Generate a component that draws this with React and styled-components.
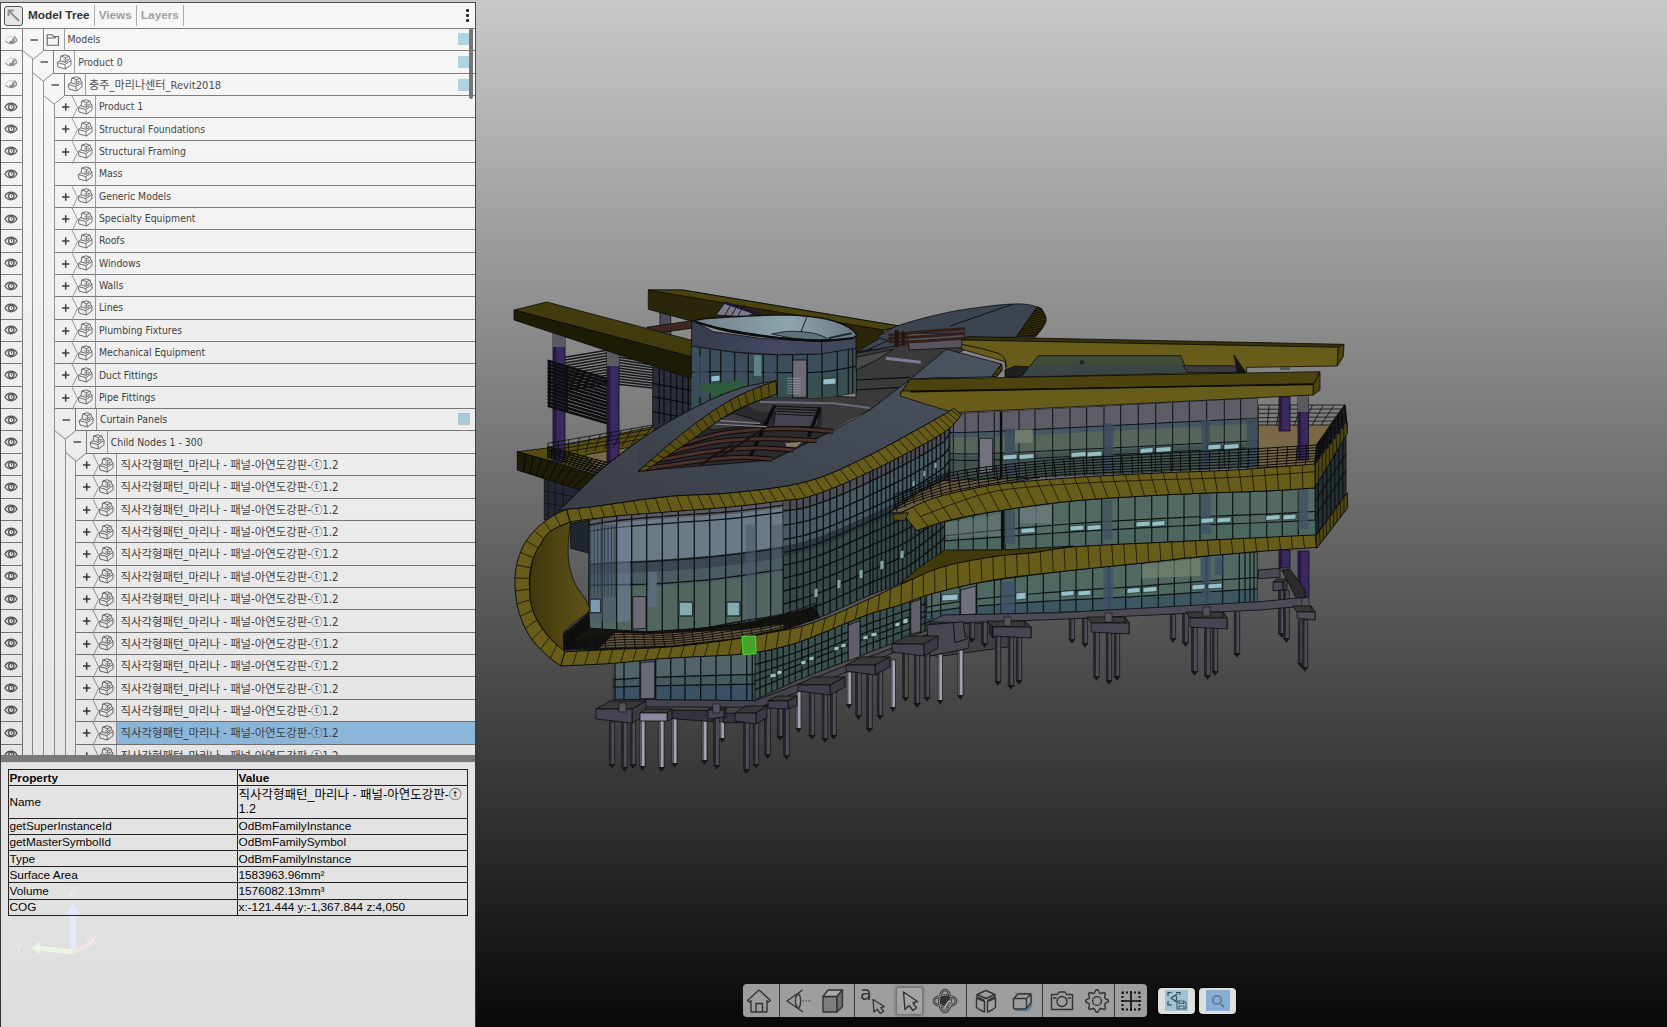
import React from "react";
import styled, { createGlobalStyle } from "styled-components";

const GlobalStyle = createGlobalStyle`
  * { box-sizing: border-box; }
  html, body, #root { height: 100%; margin: 0; }
  body { overflow: hidden; font-family: "Liberation Sans", Arial, sans-serif; }
`;

/* ---------- page shell ---------- */

const Viewer = styled.main`
  display: grid;
  grid-template: 1027px / 1667px;
  width: 1667px;
  height: 1027px;
  overflow: hidden;
  background: linear-gradient(#c9c9c9, #090909);
  > * { grid-area: 1 / 1; }
`;

const Scene = styled.svg`
  display: block;
  width: 1667px;
  height: 1027px;
`;

const Panel = styled.aside`
  display: flex;
  flex-direction: column;
  width: 476px;
  height: 1025px;
  margin-top: 2px;
  border: solid #3a3a3a;
  border-width: 1px 1px 0 1px;
  background: #fff;
  opacity: 0.865;
  z-index: 1;
`;

/* ---------- tree header ---------- */

const TreeHeader = styled.header`
  display: flex;
  align-items: center;
  flex: 0 0 26px;
  padding-left: 3px;
  border-bottom: 1px solid #707070;
`;

const CollapseButton = styled.button`
  display: grid;
  place-items: center;
  width: 19px;
  height: 20px;
  padding: 0;
  border: 1px solid #444;
  border-radius: 3px;
  background: #ececec;
`;

const Tab = styled.span`
  height: 21px;
  padding: 0 4px 0 ${(p) => (p.$first ? 5 : 4)}px;
  border-right: 1px solid #aaa;
  font-size: 11.8px;
  font-weight: bold;
  line-height: 21px;
  color: ${(p) => (p.$active ? "#161616" : "#9a9a9a")};
`;

const MenuDots = styled.div`
  display: flex;
  flex-direction: column;
  gap: 2px;
  margin: 0 6px 0 auto;
  &::before, &::after, > i {
    content: "";
    width: 3px;
    height: 3px;
    border-radius: 1px;
    background: #111;
  }
`;

/* ---------- tree ---------- */

const Tree = styled.div`
  display: flex;
  flex-direction: column;
  flex: 0 0 726px;
  overflow: hidden;
  position: relative;
`;

const Row = styled.div`
  display: flex;
  flex: 0 0 22.36px;
`;

const EyeCell = styled.div`
  display: grid;
  place-items: center;
  width: 21.5px;
  padding-right: 0;
  border-right: 1px solid #777;
  border-bottom: 1px solid #777;
`;

const Guide = styled.div`
  width: 10.8px;
  border-right: 1px solid #909090;
  border-top: ${(p) => (p.$late ? "8px solid #fff" : "0")};
`;

const ExpandCell = styled.div`
  position: relative;
  width: ${(p) => (p.$open ? 21 : 30.5)}px;
  border-right: ${(p) => (p.$open ? "1px solid #777" : "0")};
  border-bottom: ${(p) => (p.$open ? "0" : "1px solid #777")};
  z-index: ${(p) => (p.$open ? 2 : 1)};
  margin-right: ${(p) => (p.$open ? 0 : -10.5)}px;
`;

const ExpandMark = styled.svg`
  position: absolute;
  left: 0;
  top: 0;
  overflow: visible;
`;

const IconCell = styled.div`
  display: grid;
  place-items: center;
  width: 21px;
  border-right: 1px solid #999;
  border-bottom: 1px solid #777;
`;

const Label = styled.div`
  display: flex;
  align-items: center;
  flex: 1;
  padding: ${(p) => (p.$korean ? 2 : 0)}px 5px ${(p) => (p.$korean ? 0 : 1)}px 3px;
  border-bottom: 1px solid #777;
  background: ${(p) => (p.$selected ? "#97c9f2" : "transparent")};
  font-family: "DejaVu Sans Condensed", "Noto Sans CJK KR", sans-serif;
  font-size: ${(p) => (p.$korean ? p.$size || 11.4 : 10.4)}px;
  line-height: ${(p) => (p.$korean ? 19 : 20)}px;
  white-space: nowrap;
  color: ${(p) => (p.$korean ? "#3c3c3c" : "#333")};
`;

const Swatch = styled.i`
  width: 12px;
  height: 12px;
  margin-left: auto;
  background: #add8e6;
`;

const ScrollThumb = styled.div`
  position: absolute;
  top: -3px;
  right: 2px;
  width: 4px;
  height: 73px;
  border-radius: 2px;
  background: #6c6c6c;
`;

const Splitter = styled.div`
  flex: 0 0 7px;
  background: #838383;
`;

/* ---------- property table ---------- */

const PropertyPane = styled.section`
  padding: 6px 7px 0 7px;
  border-top: 1px solid #eee;
`;

const Table = styled.table`
  width: 459px;
  border-collapse: collapse;
  table-layout: fixed;
  font-size: 11.8px;
  color: #000;
`;

const Cell = styled.td`
  height: ${(p) => (p.$tall ? 32.4 : 16.2)}px;
  padding: 0 1px 0 0.5px;
  border: 1px solid #222;
  line-height: 14px;
  font-size: ${(p) => (p.$korean ? 12.5 : 11.8)}px;
  font-family: "Liberation Sans", "Noto Sans CJK KR", sans-serif;
  font-weight: ${(p) => (p.$head ? "bold" : "normal")};
  word-break: break-all;
  line-break: anywhere;
`;

/* ---------- bottom toolbar ---------- */

const Dock = styled.nav`
  display: flex;
  align-self: end;
  align-items: center;
  height: 33px;
  margin: 0 0 10px 743px;
  z-index: 1;
`;

const ToolGroup = styled.div`
  display: flex;
  align-items: center;
  justify-content: space-around;
  width: ${(p) => p.$w}px;
  height: 33px;
  padding: 0 ${(p) => Math.max(0, p.$shift || 0)}px 0 ${(p) => Math.max(0, -(p.$shift || 0))}px;
  border-right: ${(p) => (p.$last ? "0" : "1px solid #3a3a3a")};
  border-radius: ${(p) => (p.$first ? "4px 0 0 4px" : p.$last ? "0 4px 4px 0" : "0")};
  background: #9e9e9e;
`;

const Tool = styled.button`
  display: grid;
  place-items: center;
  width: 27px;
  height: 28px;
  padding: 0;
  border: ${(p) => (p.$active ? "1px solid #777" : "0")};
  background: ${(p) => (p.$active ? "#a4a4a4" : "transparent")};
  box-shadow: ${(p) => (p.$active ? "0 0 3px #555" : "none")};
`;

const ExtraButton = styled.button`
  display: grid;
  place-items: center;
  width: ${(p) => p.$w}px;
  height: 26px;
  margin-left: ${(p) => p.$gap}px;
  padding: 0;
  border: 0;
  border-radius: 4px;
  background: #dfdfdf;
  box-shadow: 0 0 0 1px #000;
`;

const ExtraIcon = styled.span`
  display: grid;
  place-items: center;
  width: ${(p) => p.$w}px;
  height: 21px;
  background: ${(p) => p.$bg};
`;

/* ---------- small icons ---------- */

const Eye = ({ faded }) =>
  faded ? (
    <svg width="14" height="12" viewBox="0 0 14 12" fill="none" stroke="#777">
      <path d="M1 6.5C3 3 7 1.5 10 3" stroke="#ccc" />
      <path d="M1.500 7C4 10.500 9 10.500 12.500 7C13 5 11.500 3.500 10 2.500" strokeWidth="1.200" stroke="#888" />
      <path d="M5.500 7.500C8 9 9.800 8 9.400 4" strokeWidth="2.600" stroke="#888" />
    </svg>
  ) : (
    <svg width="14" height="12" viewBox="0 0 14 12" fill="none" stroke="#555">
      <path d="M1 6C3.5 1 10.500 1 13 6C10.500 11 3.500 11 1 6Z" strokeWidth="1.300" />
      <circle cx="7.200" cy="6" r="2.700" strokeWidth="1.400" />
      <path d="M7.500 4.500V6.500" />
    </svg>
  );

const PartIcon = () => (
  <svg width="16" height="16" viewBox="0 0 16 16" fill="none" stroke="#6a6a6a" strokeWidth="1" strokeLinejoin="round">
    <path d="M4.800 2L9 0.800L13.200 2.300L13.700 4.800L15 6V10.800L9.500 15L2 13L1.200 8.500L4 6.800Z" />
    <path d="M4.800 2L9.500 3.600L13.200 2.300M9.500 3.600L9.200 8.400M4 6.800L9.200 8.400L13.700 4.800M1.200 8.500L8.800 10.600L15 6.500M8.800 10.600L9.500 15" />
    <path d="M7 6L11.500 5.200M11.500 5V8.500" stroke="#9a9a9a" />
  </svg>
);

const FolderIcon = () => (
  <svg width="15" height="14" viewBox="0 0 15 14" fill="none" stroke="#555" strokeWidth="1.1">
    <path d="M1.200 12.200V1.800H6L7.500 3.500H12.500V12.200ZM1.200 5H9L10 3.500" />
  </svg>
);

/* ---------- tree data ---------- */

const PANEL_NAME = "직사각형패턴_마리나 - 패널-아연도강판-ⓣ1.2";
const group = (label, state = "closed") => ({ label, level: 3, state });

const ROWS = [
  { label: "Models", level: 0, state: "open", faded: true, swatch: true, folder: true },
  { label: "Product 0", level: 1, state: "open", faded: true, swatch: true },
  { label: "충주_마리나센터_Revit2018", level: 2, state: "open", faded: true, swatch: true, korean: true, size: 11.1 },
  group("Product 1"),
  group("Structural Foundations"),
  group("Structural Framing"),
  group("Mass", "leaf"),
  group("Generic Models"),
  group("Specialty Equipment"),
  group("Roofs"),
  group("Windows"),
  group("Walls"),
  group("Lines"),
  group("Plumbing Fixtures"),
  group("Mechanical Equipment"),
  group("Duct Fittings"),
  group("Pipe Fittings"),
  { ...group("Curtain Panels", "open"), swatch: true },
  { label: "Child Nodes 1 - 300", level: 4, state: "open" },
  ...Array.from({ length: 14 }, (_, i) => ({
    label: PANEL_NAME, level: 5, state: "closed", korean: true, selected: i === 12,
  })),
];

function TreeRow({ row, previous }) {
  const open = row.state === "open";
  const startsBranch = previous && previous.level < row.level;
  return (
    <Row>
      <EyeCell><Eye faded={row.faded} /></EyeCell>
      {Array.from({ length: row.level }, (_, i) => (
        <Guide key={i} $late={startsBranch && i === row.level - 1} />
      ))}
      <ExpandCell $open={open}>
        <ExpandMark width="30" height="22" viewBox="0 0 30 22" fill="none">
          {open && (
            <>
              <path d="M0.500 21.800H20.500L10.600 30Z" fill="#fff" />
              <path d="M0 21.800L10.300 30.200L20.500 21.800" stroke="#888" />
              <path d="M7.500 11H15" stroke="#444" strokeWidth="1.500" />
            </>
          )}
          {row.state === "closed" && (
            <>
              <path d="M17 0L22.500 11.500L17 23" stroke="#999" />
              <path d="M7 11H14.400M10.700 7.300V14.700" stroke="#333" strokeWidth="1.500" />
            </>
          )}
        </ExpandMark>
      </ExpandCell>
      <IconCell>{row.folder ? <FolderIcon /> : <PartIcon />}</IconCell>
      <Label $korean={row.korean} $size={row.size} $selected={row.selected}>
        {row.label}
        {row.swatch && <Swatch />}
      </Label>
    </Row>
  );
}

const PROPERTIES = [
  ["Name", PANEL_NAME],
  ["getSuperInstanceId", "OdBmFamilyInstance"],
  ["getMasterSymbolId", "OdBmFamilySymbol"],
  ["Type", "OdBmFamilyInstance"],
  ["Surface Area", "1583963.96mm²"],
  ["Volume", "1576082.13mm³"],
  ["COG", "x:-121.444 y:-1,367.844 z:4,050"],
];

/* ---------- building geometry ---------- */

const tile = (ox, oy) => (...n) => {
  const out = [];
  for (let i = 0; i < n.length; i += 2) out.push([ox + n[i] / 3, oy + n[i + 1] / 3]);
  return out;
};
const nw = tile(500, 270);
const ne = tile(900, 290);
const sw = tile(500, 500);
const se = tile(900, 540);

const str = (pts) => pts.map(([x, y]) => `${x.toFixed(1)},${y.toFixed(1)}`).join(" ");

function smooth(pts) {
  if (pts.length < 3) return pts;
  const out = [];
  for (let i = 0; i < pts.length - 1; i++) {
    const a = pts[Math.max(0, i - 1)], b = pts[i], c = pts[i + 1], d = pts[Math.min(pts.length - 1, i + 2)];
    for (let k = 0; k < 8; k++) {
      const t = k / 8, t2 = t * t, t3 = t2 * t;
      out.push([0, 1].map((j) =>
        0.5 * (2 * b[j] + (c[j] - a[j]) * t + (2 * a[j] - 5 * b[j] + 4 * c[j] - d[j]) * t2 + (3 * b[j] - a[j] - 3 * c[j] + d[j]) * t3)));
    }
  }
  out.push(pts[pts.length - 1]);
  return out;
}

function along(pts, t) {
  const lens = pts.slice(1).map((p, i) => Math.hypot(p[0] - pts[i][0], p[1] - pts[i][1]));
  let d = t * lens.reduce((a, b) => a + b, 0);
  for (let i = 0; i < lens.length; i++) {
    if (d <= lens[i] || i === lens.length - 1) {
      const k = lens[i] ? Math.min(1, d / lens[i]) : 0;
      return [pts[i][0] + (pts[i + 1][0] - pts[i][0]) * k, pts[i][1] + (pts[i + 1][1] - pts[i][1]) * k];
    }
    d -= lens[i];
  }
  return pts[0];
}

const atX = (pts, x) => {
  for (let i = 0; i < pts.length - 1; i++) {
    const [a, b] = [pts[i], pts[i + 1]];
    if (x >= a[0] && x <= b[0] && b[0] > a[0]) return a[1] + ((b[1] - a[1]) * (x - a[0])) / (b[0] - a[0]);
  }
  return x < pts[0][0] ? pts[0][1] : pts[pts.length - 1][1];
};

const Poly = ({ p, f, s = "#0b0c0e", w = 0.8, o }) => (
  <polygon points={str(p)} fill={f} stroke={s} strokeWidth={w} strokeLinejoin="round" opacity={o} />
);
const Line = ({ p, s = "#0b0c0e", w = 0.9, o, curve }) => (
  <polyline points={str(curve ? smooth(p) : p)} fill="none" stroke={s} strokeWidth={w} opacity={o} />
);

function Band({ top, bottom, n, f = "#675c1a", line = "#15130a", w = 0.8, ease = 1 }) {
  const a = smooth(top), b = smooth(bottom);
  return (
    <g>
      <Poly p={[...a, ...[...b].reverse()]} f={f} w={1} />
      {Array.from({ length: n - 1 }, (_, i) => {
        const t = 1 - Math.pow(1 - (i + 1) / n, ease);
        return <Line key={i} p={[along(a, t), along(b, t)]} s={line} w={w} />;
      })}
    </g>
  );
}

function Facade({ top, bottom, f, xs, rows = [], w = 1, s = "#0d1316", base }) {
  const a = smooth(top), b = smooth(bottom);
  const x0 = a[0][0], x1 = a[a.length - 1][0];
  const cut = (r) => Array.from({ length: 31 }, (_, i) => {
    const x = x0 + ((x1 - x0) * i) / 30;
    const y0 = atX(a, x), y1 = atX(b, x);
    return [x, y0 + (y1 - y0) * r];
  });
  return (
    <g>
      <Poly p={[...a, ...[...b].reverse()]} f={f} />
      {(base || []).map(([r0, r1, c], i) => <Poly key={i} p={[...cut(r0), ...cut(r1).reverse()]} f={c} s="none" />)}
      {xs.map((x, i) => <Line key={`v${i}`} p={[[x, atX(a, x)], [x, atX(b, x)]]} w={w} s={s} />)}
      {rows.map((r, i) => <Line key={`h${i}`} p={cut(r)} w={w} s={s} />)}
    </g>
  );
}

function Railing({ top, bottom, n, rows = 5, w = 0.8 }) {
  const a = smooth(top), b = smooth(bottom);
  return (
    <g>
      {Array.from({ length: rows }, (_, r) => (
        <Line key={r} w={w} p={Array.from({ length: 25 }, (_, i) => {
          const p = along(a, i / 24), q = along(b, i / 24), k = r / rows;
          return [p[0] + (q[0] - p[0]) * k, p[1] + (q[1] - p[1]) * k];
        })} />
      ))}
      {Array.from({ length: n + 1 }, (_, i) => <Line key={`p${i}`} w={w} p={[along(a, i / n), along(b, i / n)]} />)}
    </g>
  );
}

const range = (a, b, n) => Array.from({ length: n + 1 }, (_, i) => a + ((b - a) * i) / n);
const X = (ox, list) => list.map((v) => ox + v / 3);

const Pile = ({ x, y, b, w = 6, light }) => (
  <g>
    <rect x={x - w / 2} y={y} width={w} height={b - y - 4} fill={light ? "#a3a2b2" : "#4e4c57"} stroke="#111" strokeWidth="0.700" />
    <rect x={x - w / 2} y={y} width={w * 0.4} height={b - y - 4} fill={light ? "#55545f" : "#25252b"} />
    <path d={`M${x - w / 2 - 0.5} ${b - 5}h${w + 1}l${-w / 2 - 0.5} 5z`} fill="#17171a" />
  </g>
);

const Cap = ({ x, y, w, h, d = 8, side = 14, f = "#474552" }) => (
  <g>
    <Poly p={[[x, y + d], [x + side, y], [x + w + side, y], [x + w, y + d]]} f="#39393a" />
    <Poly p={[[x + w, y + d], [x + w + side, y], [x + w + side, y + h - d / 2], [x + w, y + d + h - 4]]} f="#3b3a42" />
    <Poly p={[[x, y + d], [x + w, y + d], [x + w, y + d + h - 4], [x, y + h]]} f={f} />
  </g>
);

const Column = ({ x, y, b, w = 11, grey = 0 }) => (
  <g>
    <rect x={x} y={y} width={w} height={b - y} fill="#3a285f" stroke="#120c1e" strokeWidth="0.800" />
    <rect x={x} y={y} width={w * 0.28} height={b - y} fill="#251941" />
    {grey > 0 && <rect x={x} y={y} width={w} height={grey} fill="#5b5a62" />}
  </g>
);

function Piles() {
  const left = [[612, 722, 769], [624.500, 722, 772], [633, 718, 769], [642.500, 720, 771, 1], [661.500, 720, 772, 1], [674.500, 718, 768, 1], [704.500, 720, 765, 1], [716.500, 718, 770], [722, 722, 743, 1], [746.500, 722, 774], [756, 716, 769], [767.500, 708, 759], [780, 706, 741], [786.500, 708, 760], [798.500, 690, 733, 1], [812, 690, 740], [825, 692, 743], [833.500, 690, 740], [849, 672, 709, 1], [858.500, 670, 720], [869.500, 672, 733], [880, 670, 720], [893, 660, 712, 1], [905.500, 650, 702], [917, 652, 708], [927, 650, 702], [940, 654, 705, 1], [960.500, 650, 700, 1]];
  const right = [[972, 618, 643], [984.500, 620, 648], [998, 634, 686], [1011, 634, 690], [1019, 634, 685], [1072, 618, 644], [1085, 618, 648], [1096.500, 630, 681], [1109, 630, 685], [1117, 628, 681], [1173, 614, 643], [1185.500, 612, 647], [1194.500, 626, 676], [1207.500, 626, 680], [1215, 624, 676], [1237, 610, 658], [1281.500, 590, 638], [1286.500, 590, 643], [1301, 620, 668], [1305, 620, 672]];
  return [...left, ...right].map(([x, y, b, light], i) => <Pile key={i} x={x} y={y} b={b} light={light} w={light ? 5 : 5.500} />);
}

const panes = (list, f = "#93bfc4") =>
  list.map(([x, y, w, h = 5], i) => (
    <polygon key={i} points={`${x},${y + 1} ${x + w},${y} ${x + w},${y + h} ${x},${y + h + 1}`} fill={f} stroke="#161a1c" strokeWidth="0.600" />
  ));

function Building() {
  const bandTop = [...sw(200, 28), ...nw(280, 710, 500, 680, 700, 668, 920, 635, 1100, 560, 1320, 440), ...ne(160, 355)];
  const bandBottom = [...sw(210, 65), ...nw(350, 738, 500, 726, 700, 710, 850, 692, 940, 676, 1100, 610, 1320, 495), ...ne(185, 375)];
  const lowTop = [...sw(195, 455, 350, 448, 520, 440, 700, 418, 800, 400, 900, 380, 1000, 345, 1100, 300, 1210, 250), ...se(130, 80, 280, 50, 400, 38, 530, 20, 830, 5, 1245, -15)];
  const lowBottom = [...sw(182, 498, 340, 490, 500, 475, 730, 462, 850, 440, 940, 410, 1100, 345), ...se(0, 195, 100, 160, 280, 120, 480, 95, 700, 72, 900, 50, 1072, 35, 1250, 22)];
  const midTop = ne(5, 668, 100, 625, 250, 590, 400, 572, 600, 558, 800, 548, 1000, 540, 1245, 522);
  const midBottom = ne(50, 722, 150, 690, 300, 662, 500, 635, 700, 620, 900, 610, 1100, 603, 1245, 594);

  return (
    <g>
      {/* rear roof beams */}
      <Poly p={nw(480, 125, 512, 135, 512, 210, 480, 210)} f="#4e4b58" />
      <Poly p={nw(445, 60, 548, 60, 1210, 170, 1195, 232, 1070, 255, 640, 160, 570, 152, 445, 118)} f="#2b2509" />
      <Poly p={nw(445, 60, 548, 60, 1210, 170, 1150, 180)} f="#4b430f" />
      <Poly p={nw(1150, 180, 1205, 170, 1195, 222, 1150, 238)} f="#6b601b" />
      <Poly p={nw(648, 135, 675, 98, 760, 130, 740, 140)} f="#7d7b8b" />
      <Line p={nw(675, 98, 780, 134)} s="#1f163a" w={2.5} />
      {[675, 695, 715].map((x) => <Line key={x} p={nw(x, 135, x + 18, 104)} />)}
      <Poly p={nw(440, 172, 575, 152, 575, 175, 480, 188)} f="#3f2722" />

      {/* tower behind the left beam */}
      <Poly p={nw(458, 290, 580, 320, 580, 430, 458, 480)} f="#2b2d3a" />
      {[478, 492, 512, 530, 548, 565].map((x) => <Line key={x} p={nw(x, 295, x, 460)} w={1.2} />)}
      {[350, 390, 435].map((y) => <Line key={y} p={nw(458, y - 10, 575, y + 12)} w={1.200} />)}

      {/* left terrace */}
      <Facade top={nw(133, 625, 275, 665)} bottom={nw(133, 750, 205, 750)} f="#252834" xs={X(500, [145, 165, 190])} rows={[0.3, 0.6]} />
      <Poly p={nw(52, 545, 160, 532, 460, 470, 470, 500, 290, 610)} f="#574d13" />
      <Poly p={nw(255, 555, 400, 530, 330, 585, 290, 600)} f="#7b6946" />
      <Band top={nw(52, 545, 290, 615)} bottom={nw(52, 600, 240, 660)} n={10} f="#1e1b06" line="#000" />

      {/* columns and louvres */}
      <Column x={553} y={333} b={462} w={12} grey={14} />
      {range(0, 1, 12).map((t) => <Line key={t} p={nw(195, 262 + t * 100, 325, 240 + t * 100, 458, 262 + t * 92)} w={1.500} s="#17181a" />)}
      {range(0, 1, 13).map((t) => <Line key={t} p={nw(143, 272 + t * 135, 330, 330 + t * 132)} w={2.700} s="#0e0e11" />)}
      <Line p={nw(200, 285, 200, 425)} w={2} /><Line p={nw(148, 270, 148, 408)} w={3} />
      <Column x={607} y={350} b={466} w={12} grey={16} />
      <Railing top={nw(143, 520, 460, 465)} bottom={nw(150, 565, 420, 520)} n={10} rows={4} />
      <Railing top={nw(143, 530, 330, 580)} bottom={nw(143, 565, 290, 615)} n={14} rows={6} w={1.100} />
      <Poly p={nw(42, 120, 140, 96, 580, 212, 580, 262)} f="#423b0e" />
      <Poly p={nw(42, 120, 580, 262, 580, 328, 42, 150)} f="#1d1a05" />

      {/* rear roof wing */}
      <Poly p={[...smooth(ne(-60, 135, 0, 105, 140, 68, 270, 48, 345, 42, 385, 44, 415, 52)), ...ne(350, 142, 190, 142, 100, 160, -90, 180)]} f="#3c444f" />
      <Line p={ne(150, 108, 340, 42)} />
      <Band top={ne(412, 50, 380, 95, 350, 140)} bottom={ne(425, 56, 438, 85, 430, 110, 405, 142)} n={18} f="#3e370c" line="#0b0a03" />

      {/* service terrace */}
      <Poly p={nw(1068, 250, 1215, 222, 1320, 215, 1400, 235, 1240, 330, 1110, 420, 970, 482, 820, 570, 600, 590, 640, 450, 830, 372, 1068, 382)} f="#3b3a3b" />
      <Poly p={nw(1068, 262, 1180, 238, 1130, 270, 1068, 300)} f="#49494c" />
      <Poly p={nw(1220, 190, 1390, 190, 1400, 232, 1228, 240)} f="#57555f" />
      {[0, 14, 28].map((d) => <Line key={d} p={nw(1165, 196 + d * 0.700, 1260, 186 + d, 1395, 176 + d)} s="#34201b" w={3} curve />)}
      <Line p={nw(1190, 180, 1190, 232)} w={4} s="#24130f" />
      <Line p={nw(1210, 184, 1210, 228)} w={3} s="#24130f" />
      <Line p={nw(1158, 265, 1262, 277)} s="#7d7b93" w={3} />
      {[[1068, 330, 1230, 322], [1068, 360, 1200, 352], [820, 395, 1110, 415]].map((v, i) => <Line key={i} p={nw(...v)} w={1.200} />)}

      {/* right roof beams */}
      <Poly p={ne(185, 150, 205, 140, 1330, 163, 1330, 175, 185, 150)} f="#373109" />
      <Poly p={ne(185, 150, 1315, 172, 1312, 228, 1040, 232, 1040, 250, 320, 262, 315, 215, 185, 178)} f="#675c1a" />
      <Poly p={ne(1315, 172, 1332, 163, 1330, 200, 1312, 228)} f="#4d440f" />
      <Line p={ne(185, 163, 260, 180, 308, 198, 320, 232)} curve />
      <Poly p={ne(415, 197, 842, 197, 863, 248, 365, 260)} f="#414b3a" />
      <Poly p={ne(395, 225, 850, 225, 863, 248, 365, 260)} f="#38434a" s="none" o={0.7} />
      <Poly p={ne(850, 227, 1000, 227, 1035, 247, 863, 248)} f="#3c3a3e" />
      <Poly p={ne(1002, 195, 1037, 247, 1012, 247)} f="#16161b" />
      <circle cx="1082" cy="362.500" r="2.200" fill="#1c252c" />
      <Poly p={ne(315, 240, 345, 228, 385, 230, 365, 258, 315, 262)} f="#202020" />

      {/* main roof */}
      <path
        d={`M${str(smooth(nw(175, 722, 235, 665, 320, 585, 450, 490, 600, 405, 720, 355, 828, 332)))} L${str(smooth(nw(828, 334, 690, 390, 540, 490, 415, 603)))} L${str(nw(600, 580, 815, 570, 1000, 482, 1110, 420, 1240, 320, 1330, 245))} L${str(ne(140, 178, 305, 222, 275, 260, 30, 268, 5, 305, 160, 355))} L${str([...smooth(bandTop)].reverse())} Z`}
        fill="url(#roof)" stroke="#0b0c0e" strokeWidth="0.800"
      />
      <Poly p={nw(1200, 372, 1235, 328, 1330, 322, 1400, 330, 1400, 410)} f="#5a5014" />
      <Band top={ne(305, 222, 275, 260)} bottom={ne(307, 240, 290, 260)} n={4} f="#4d440f" />

      {/* roof opening */}
      <Poly p={nw(830, 372, 965, 410, 1000, 480, 815, 570, 415, 603, 540, 530, 700, 425)} f="#2b2a2c" />
      <Poly p={nw(600, 470, 700, 430, 800, 460, 640, 480)} f="#3c3c40" />
      <Poly p={nw(830, 405, 965, 415, 950, 470, 820, 470)} f="#45434f" />
      <Poly p={nw(720, 372, 830, 372, 1110, 414, 1000, 480, 965, 480, 965, 420, 780, 425, 720, 400)} f="#3a393b" s="none" />
      {[0, 8, 16, 24].map((d) => <Line key={d} p={nw(830, 408 + d, 960, 414 + d)} />)}
      <Line p={nw(825, 405, 750, 560)} w={3.500} /><Line p={nw(960, 412, 925, 500)} w={3.500} />
      {[[545, 522, 680, 488, 850, 476, 1000, 484], [505, 548, 650, 515, 800, 506, 950, 512], [470, 572, 620, 545, 760, 534, 880, 540], [440, 596, 600, 572, 720, 562, 815, 568]].map((v, i) => (
        <g key={i}><Line p={nw(...v)} s="#0f0a09" w={5} curve /><Line p={nw(...v)} s="#49302a" w={3} curve /></g>
      ))}
      {[[660, 560, 800, 470], [600, 585, 700, 520]].map((v, i) => <Line key={i} p={nw(...v)} s="#1c1210" w={2.500} />)}
      {[[640, 462, 800, 470], [660, 452, 780, 460]].map((v, i) => <Line key={i} p={nw(...v)} s="#85838f" w={1.200} />)}
      <Poly p={nw(855, 520, 905, 515, 890, 530, 860, 530)} f="#86805f" s="none" />
      <Line p={nw(780, 396, 1000, 400, 1110, 414)} s="#6c6a7e" w={2} />

      {/* rotunda */}
      <Facade
        top={nw(574, 225, 700, 246, 830, 254, 960, 250, 1068, 232)}
        bottom={nw(574, 420, 700, 385, 830, 382, 960, 384, 1068, 368)}
        f="#3b4e5a" xs={X(500, [600, 630, 662, 704, 745, 790, 832, 878, 922, 966, 1012, 1045, 1058])} rows={[0.42]} w={1.200}
        base={[[0.5, 1, "#384f50"]]}
      />
      {[[582, 625], [668, 700], [710, 740], [795, 825]].map(([a, b]) => <Poly key={a} p={nw(a, 256, b, 258, b, 378, a, 384)} f="#3f4d63" s="none" o={0.700} />)}
      <Poly p={nw(598, 345, 720, 330, 745, 350, 650, 375, 598, 362)} f="#2f5a3e" s="none" />
      <Poly p={nw(762, 256, 784, 256, 784, 318, 762, 318)} f="#5d8485" s="none" />
      <Poly p={nw(878, 270, 920, 270, 920, 382, 878, 382)} f="#6c6b75" />
      {range(325, 370, 6).map((y) => <Line key={y} p={nw(862, y, 902, y)} s="#99a0a8" w={0.700} />)}
      {panes([[711, 375, 9, 6], [823, 378, 13, 6]], "#94bfcc")}
      <Poly p={nw(575, 150, 640, 185, 780, 205, 960, 215, 1068, 200, 1068, 235, 960, 252, 830, 254, 700, 246, 574, 228)} f="url(#drum)" />
      <Poly p={smooth(nw(578, 152, 640, 144, 800, 136, 900, 137, 990, 150, 1050, 175, 1066, 200, 1000, 209, 900, 210, 760, 192, 650, 172, 578, 152))} f="url(#dish)" w={1.300} />
      <Poly p={smooth(nw(815, 192, 870, 184, 940, 190, 980, 208, 890, 208))} f="#5f7179" />
      <Line p={nw(588, 156, 680, 182, 800, 200, 960, 212, 1060, 204)} w={2.200} curve />
      <Line p={nw(920, 142, 903, 186)} /><Line p={nw(965, 212, 965, 250)} />
      <Line p={nw(985, 205, 1055, 190)} s="#222b30" w={2} />
      <Poly p={nw(1070, 245, 1140, 205, 1165, 212, 1100, 240)} f="#3d4652" />

      {/* roof edge beside the opening */}
      <Poly p={[...smooth(nw(415, 510, 560, 425, 700, 362, 828, 331)), ...smooth(nw(828, 334, 700, 387, 560, 482, 415, 603))]} f="url(#roof)" s="none" />
      <Line p={nw(175, 722, 235, 665, 320, 585, 450, 490, 600, 405, 720, 355, 828, 332)} curve />
      <Band top={nw(828, 332, 700, 385, 560, 480, 415, 603)} bottom={nw(830, 372, 700, 425, 560, 520, 435, 603)} n={20} f="#574d14" />

      {/* front beam over the right block */}
      <Poly p={ne(30, 268, 1260, 245, 1240, 284, 5, 305)} f="#4c430f" />
      <Poly p={ne(5, 303, 1240, 284, 1240, 315, 160, 368, 0, 318)} f="#675c1a" />
      <Poly p={ne(1240, 284, 1260, 247, 1260, 300, 1240, 315)} f="#4c430f" />
      <Line p={ne(30, 305, 1240, 282)} w={1.600} />

      {/* right terrace */}
      <rect x="1280" y="367" width="10" height="3" fill="#555" />
      <Poly p={ne(1075, 405, 1290, 405, 1245, 525, 1075, 532)} f="#7a6947" />
      <Railing top={ne(1075, 345, 1335, 345)} bottom={ne(1075, 408, 1290, 405)} n={8} rows={5} />
      <Column x={1279} y={397} b={431} w={11} />
      <Column x={1298} y={396} b={460} w={10.500} grey={16} />

      {/* right block, upper storey */}
      <Facade
        top={ne(150, 372, 305, 365, 1072, 325)} bottom={ne(140, 562, 305, 565, 1072, 530)} f="#50605f"
        xs={X(900, [160, 195, 235, 283, 305, 357, 405, 458, 510, 560, 612, 662, 715, 767, 818, 868, 920, 973, 1022])}
        rows={[0.29, 0.62, 0.72]} base={[[0, 0.29, "#5e5c67"], [0.29, 0.37, "#455763"], [0.37, 0.62, "#56645c"], [0.65, 1, "#43534f"]]}
      />
      {[[315, 415, 345, 560], [612, 400, 640, 548], [905, 390, 930, 535], [1040, 385, 1072, 530]].map(([a, b, c, d]) => <Poly key={a} p={ne(a, b, c, b, c, d, a, d)} f="#3c4b5c" s="none" o={0.8} />)}
      <Poly p={ne(345, 420, 398, 418, 398, 458, 345, 460)} f="#6f7a6c" s="none" />
      <Poly p={ne(238, 445, 278, 445, 278, 545, 238, 550)} f="#72727d" />
      <Line p={ne(303, 365, 303, 565)} w={2.200} />
      {panes([[1003, 454, 14], [1019, 453.500, 15], [1071, 451.500, 15], [1087, 451, 15], [1140, 447.500, 13], [1156, 446.500, 15], [1208, 444, 13], [1224, 443.500, 15]])}
      <Facade top={ne(1245, 590, 1338, 440)} bottom={ne(1248, 735, 1338, 610)} f="#262f34" xs={X(900, [1255, 1268, 1280, 1292, 1304, 1316, 1328])} rows={[0.300, 0.600]} w={1.400} />
      <Band top={ne(1245, 522, 1342, 398)} bottom={ne(1245, 592, 1342, 430)} n={9} f="#4f4611" />
      <Band top={ne(1248, 737, 1342, 608)} bottom={ne(1250, 775, 1342, 655)} n={9} f="#4f4611" />

      {/* curved glazing */}
      <Poly p={sw(210, 70, 268, 60, 268, 160, 212, 145)} f="#20262b" />
      <Facade
        top={[...sw(268, 62, 350, 48, 500, 34), ...nw(700, 710, 850, 692)]} bottom={sw(265, 385, 440, 395, 600, 385, 700, 370, 850, 345)}
        f="#51665f" base={[[0, 0.08, "#5c5a64"], [0.06, 0.4, "#6b7a87"], [0.4, 0.5, "#3c4752"], [0.5, 0.62, "#4a5c62"]]}
        xs={X(500, [268, 307, 350, 395, 440, 487, 535, 583, 629, 677, 725, 768, 812, 850])} rows={[0.040, 0.100, 0.410, 0.600]} w={1.300}
      />
      {[[268, 348, "#4b5a6e"], [352, 390, "#7380a0"], [737, 768, "#48586b"], [815, 845, "#4a5c66"]].map(([a, b, c]) => <Poly key={a} p={sw(a, 75, b, 72, b, 365, a, 365)} f={c} s="none" o={0.550} />)}
      {range(272, 345, 7).map((x) => <Line key={x} p={sw(x, 75, x, 290)} s="#2a3542" w={0.800} />)}
      <Poly p={sw(398, 290, 438, 290, 438, 385, 398, 388)} f="#6a6b76" />
      <Poly p={sw(445, 215, 470, 215, 470, 320, 445, 320)} f="#5c6b7c" s="none" />
      {[[537, 306, 578, 348], [680, 306, 720, 348], [270, 297, 302, 338]].map(([a, b, c, d]) => <Poly key={a} p={sw(a, b, c, b, c, d, a, d)} f={a < 300 ? "#7c9db5" : "#83abb0"} s="#2d3038" w={1.500} />)}

      <Facade
        top={[...nw(850, 692, 940, 676, 1100, 610, 1320, 495), ...ne(150, 398)]}
        bottom={[...sw(850, 390, 960, 352, 1100, 290, 1210, 245, 1280, 195), ...ne(150, 765)]} f="#374846"
        xs={[...range(790, 870, 12), ...range(873, 949, 18)]} rows={[0.080, 0.190, 0.300, 0.400, 0.500, 0.600, 0.700, 0.800, 0.900]} w={1.400}
        base={[[0, 0.080, "#4e4d54"], [0.080, 0.350, "#495a62"], [0.350, 0.430, "#2f393f"]]}
      />
      {panes([[814, 588, 4, 9], [837, 579, 4, 9], [859, 569, 4, 9], [880, 560, 4, 9], [900, 550, 4, 8], [912, 480, 3, 6], [923, 470, 3, 6], [934, 462, 3, 6]], "#7fa79f")}

      <Poly p={ne(-30, 668, 60, 605, 130, 572, 300, 565, 420, 562, 250, 592, 100, 628, 0, 668)} f="#6b5c3e" />
      <Railing top={ne(-20, 615, 60, 585, 150, 548, 400, 515, 700, 495, 1000, 480, 1250, 465)} bottom={ne(-10, 665, 100, 625, 400, 570, 700, 552, 1000, 540, 1245, 522)} n={44} rows={7} w={1} />
      <Railing top={ne(1250, 465, 1335, 345)} bottom={ne(1245, 522, 1340, 400)} n={8} rows={8} w={1.400} />

      {/* right block, middle storey */}
      <Facade
        top={ne(135, 695, 300, 662, 500, 635, 700, 620, 900, 610, 1100, 603, 1245, 594)} bottom={ne(135, 780, 305, 778, 500, 770, 700, 760, 900, 750, 1100, 742, 1245, 735)}
        f="#526a62" rows={[0.500, 0.680]} base={[[0.700, 1, "#4c6660"]]}
        xs={X(900, [175, 220, 262, 305, 315, 357, 408, 458, 508, 557, 605, 655, 705, 755, 803, 852, 900, 950, 998, 1050, 1100, 1147, 1195])} w={1.200}
      />
      <Poly p={ne(360, 655, 455, 645, 455, 700, 360, 700)} f="#6d7b80" s="none" o={0.800} />
      <Poly p={ne(135, 700, 300, 672, 300, 738, 135, 742)} f="#6d7b80" s="none" o={0.450} />
      {[[315, 660, 345, 762], [607, 630, 637, 748], [902, 612, 932, 732], [1195, 598, 1225, 718]].map(([a, b, c, d]) => <Poly key={a} p={ne(a, b, c, b, c, d, a, d)} f="#425263" s="none" o={0.850} />)}
      {panes([[1021, 527.500, 14], [1070, 525, 14], [1087, 524.500, 14], [1136, 521, 14], [1152, 520.500, 13], [1201, 517.500, 13], [1217, 517, 14], [1266, 514.500, 14], [1283, 514, 13]])}
      <Line p={ne(308, 662, 308, 778)} w={2.500} />
      <Band top={midTop} bottom={midBottom} n={33} />
      <Line p={ne(60, 680, 250, 612, 420, 588, 700, 572, 1000, 562, 1245, 545)} w={0.700} curve />
      <Poly p={nw(1180, 733, 1225, 728, 1215, 752, 1180, 750)} f="#574d14" />

      {/* main roof fascia and end loop */}
      <Poly p={smooth(sw(212, 66, 150, 95, 105, 160, 90, 240, 95, 320, 125, 380, 165, 430, 192, 450, 192, 400, 225, 365, 265, 335, 262, 308, 225, 250, 207, 190, 205, 130, 212, 66))} f="url(#loop)" />
      <Band
        top={sw(200, 28, 155, 50, 100, 95, 62, 155, 45, 235, 55, 330, 90, 410, 140, 465, 182, 498)}
        bottom={sw(210, 65, 150, 95, 120, 135, 98, 180, 88, 240, 95, 320, 120, 375, 152, 417, 195, 455)} n={15}
      />
      <Band top={bandTop} bottom={bandBottom} n={46} f="#665b19" ease={1.300} />

      {/* balcony */}
      <Poly p={[...sw(192, 450, 192, 405, 265, 345, 270, 385, 440, 395, 600, 385, 730, 370, 850, 345, 940, 322, 960, 352, 850, 390, 700, 418, 520, 440, 350, 448)]} f="#17150f" />
      <Poly p={sw(300, 443, 345, 398, 440, 402, 730, 390, 850, 372, 850, 385, 700, 415, 520, 436)} f="#66583c" s="none" />
      <Railing top={sw(192, 400, 265, 340)} bottom={sw(192, 445, 268, 385)} n={8} rows={6} w={1.100} />
      <Railing top={sw(200, 432, 350, 396, 520, 398, 730, 362, 850, 342, 945, 310)} bottom={sw(200, 448, 350, 443, 520, 436, 730, 412, 850, 388, 955, 352)} n={26} rows={6} w={0.900} />

      {/* ground floor glazing */}
      <Poly p={sw(1290, 370, 1500, 370, 1550, 395, 1530, 440, 1310, 470, 1290, 460)} f="#403f45" />
      <Facade
        top={sw(340, 490, 500, 475, 765, 460)} bottom={sw(340, 598, 765, 600)} f="#465b60" rows={[0.450, 0.660]}
        base={[[0, 0.450, "#51646a"], [0.660, 1, "#3a5064"]]} xs={X(500, [345, 372, 420, 467, 512, 555, 602, 648, 693, 740, 757])} w={1.300}
      />
      <Poly p={sw(422, 488, 464, 484, 464, 595, 422, 596)} f="#6a6a75" />
      <Facade
        top={sw(765, 458, 850, 440, 940, 410, 1100, 345, 1290, 280)} bottom={sw(765, 600, 900, 538, 1100, 460, 1290, 388)} f="#3b4f4d"
        rows={[0.250, 0.450, 0.600, 0.780]} xs={X(500, [780, 797, 815, 832, 850, 868, 886, 905, 925, 945, 965, 985, 1005, 1025, 1045, 1080, 1100, 1120, 1140, 1160, 1180, 1205, 1230, 1262, 1275])} w={1.300}
      />
      <Poly p={sw(1045, 375, 1080, 362, 1080, 470, 1045, 482)} f="#5f5e69" />
      <Poly p={sw(1232, 308, 1262, 298, 1262, 395, 1232, 402)} f="#5f5e69" />
      {panes([[770, 673, 6, 4], [777, 670, 5, 4], [801, 660, 5, 4], [809, 656, 5, 4], [834, 646, 5, 4], [841, 643, 5, 4], [863, 635, 5, 4], [871, 632, 6, 4], [895, 622, 5, 4], [903, 618, 5, 5]], "#9fc3c0")}
      <Facade
        top={se(80, 165, 230, 130, 480, 95, 700, 72, 900, 50, 1072, 35)} bottom={se(80, 238, 230, 225, 480, 215, 700, 208, 1072, 190)} f="#4f6862"
        rows={[0.500, 0.720]} base={[[0.720, 1, "#3c5760"]]} xs={X(900, [95, 122, 180, 230, 283, 303, 345, 382, 430, 480, 528, 578, 627, 677, 725, 775, 823, 872, 920, 968, 1018, 1035, 1050, 1062])} w={1.200}
      />
      <Poly p={se(725, 74, 900, 55, 900, 108, 725, 115)} f="#78866f" s="none" o={0.650} />
      {[[303, 125, 345, 220], [610, 85, 640, 210], [905, 52, 932, 195], [945, 52, 968, 105]].map(([a, b, c, d]) => <Poly key={a} p={se(a, b, c, b, c, d, a, d)} f="#3e5068" s="none" o={0.800} />)}
      <Poly p={se(182, 150, 228, 138, 228, 222, 182, 225)} f="#71717c" />
      {panes([[942, 594, 16, 6], [1016, 592, 10, 7], [1061, 590.500, 13], [1078, 590, 13], [1127, 587.500, 13], [1143, 586.500, 14], [1192, 584, 13], [1208, 583, 14]], "#95c0ca")}

      {/* lower fascia */}
      <Poly p={[...se(0, 132, 60, 80, 135, 30, 305, 30, 520, 18, 400, 40, 280, 52, 130, 82)]} f="#423a0d" />
      <Band top={lowTop} bottom={lowBottom} n={64} />
      <Poly p={sw(726, 410, 766, 408, 768, 460, 730, 464)} f="#47a22c" s="#39e021" w={1.200} />

      {/* foundations */}
      <Column x={1279} y={550} b={568} w={11} /><Column x={1298} y={551} b={597} w={11} />
      <Poly p={se(1075, 90, 1140, 85, 1140, 112, 1075, 116)} f="#4b4955" />
      <Poly p={se(1145, 90, 1170, 88, 1215, 150, 1215, 180, 1190, 178)} f="#2c2b2e" />
      <Piles />
      <Cap x={1273} y={579} w={10} h={12} d={3} side={4} />
      <Poly p={se(90, 245, 130, 225, 480, 218, 1080, 185, 1215, 172, 1215, 198, 1080, 210, 480, 238, 180, 248)} f="#4d4b56" />
      <Poly p={sw(345, 598, 765, 602, 1290, 400, 1300, 410, 780, 622, 345, 620)} f="#45434e" />
      <Poly p={sw(500, 630, 640, 632, 640, 665, 500, 655)} f="#34323e" />
      <Poly p={sw(670, 640, 710, 640, 735, 668, 670, 668)} f="#34323e" />
      <Poly p={se(80, 255, 190, 245, 195, 290, 210, 290, 205, 325, 90, 348)} f="#48464e" />
      <Line p={se(160, 248, 165, 308, 205, 295)} />
      <Cap x={596} y={701} w={36} h={18} f="#464353" />
      <Cap x={640} y={709} w={27} h={12} d={4} side={5} f="#8a89a0" />
      <Cap x={708} y={708} w={16} h={11} d={2} side={2} />
      <Cap x={735} y={706} w={21} h={15} d={7} side={11} f="#413e4d" />
      <Cap x={768} y={696} w={20} h={12} d={5} side={9} f="#413e4d" />
      <Cap x={798} y={677} w={32} h={14} d={8} side={15} f="#413e4d" />
      <Cap x={846} y={657} w={29} h={14} d={8} side={15} f="#413e4d" />
      <Cap x={892} y={636} w={32} h={16} d={8} side={14} f="#44424f" />
      <Poly p={se(270, 250, 280, 262, 280, 296, 268, 275)} f="#26262a" />
      <Cap x={993} y={621} w={38} h={15} d={6} side={-6} />
      <Cap x={1091} y={617} w={38} h={15} d={6} side={-4} />
      <Cap x={1190} y={612} w={37} h={15} d={6} side={-4} />
      {[[1004, 617], [1105, 613], [1203, 607], [1302, 598], [619, 703], [713, 704]].map(([x, y]) => <rect key={x} x={x} y={y} width="7" height="9" fill="#54525e" stroke="#111" strokeWidth="0.600" />)}
      <Cap x={1297} y={606} w={18} h={12} d={6} side={-4} f="#504e5a" />
    </g>
  );
}

const Axes = () => (
  <g fontFamily="Liberation Sans" fontSize="12">
    <path d="M73 951V912" stroke="#3a6cff" strokeWidth="6" opacity="0.800" />
    <path d="M66 914L73 902L80 914Z" fill="#3a6cff" opacity="0.800" />
    <path d="M73 952L38 948" stroke="#7be03a" strokeWidth="5" opacity="0.800" />
    <path d="M40 942L31 948L40 954Z" fill="#7be03a" opacity="0.800" />
    <path d="M73 953L90 943" stroke="#e83a3a" strokeWidth="4" opacity="0.700" />
    <path d="M86 938L95 940L90 948Z" fill="#e83a3a" opacity="0.700" />
    <text x="69" y="896" fill="#5c6cb0">Z</text>
    <text x="15" y="952" fill="#7f9f60">Y</text>
    <text x="89" y="945" fill="#b86060">X</text>
  </g>
);

/* ---------- toolbar icons ---------- */

const Glyph = styled.svg.attrs({ width: 26, height: 26, viewBox: "0 0 26 26" })`
  overflow: visible;
  fill: none;
  stroke: #333;
  stroke-width: 1.4;
  stroke-linejoin: round;
`;
const CURSOR = "M0 0L1.300 16L5.500 12.500L9.500 18L13.500 15L10 10.500L14.500 9Z";

const Home = () => <Glyph><path d="M1.500 12.500L13 2L24.500 12.500L22.500 14L21 12.800V24H5V12.800L3.500 14ZM10 24V15.500H16.500V24" /></Glyph>;
const Camera3D = () => <Glyph><path d="M17.500 2L2 13L18 24M13.500 5.500C16.500 9 16.500 17 13.500 20.500M12.500 6.500C9.500 10 9.500 16 12.500 19.500" /><path d="M17.500 13H26" strokeDasharray="1.500 1.500" strokeWidth="1" /></Glyph>;
const Box = () => <Glyph><path d="M3 8.500H17V24H3Z" fill="#7d7d7d" /><path d="M3 8.500L8 2H22.500L17 8.500Z" fill="#aaa" /><path d="M17 8.500L22.500 2V18.500L17 24Z" fill="#6c6c6c" /></Glyph>;
const Cursor = () => <Glyph><path d="M6.500 4L8 21.500L12 17.500L16 22.500L19.500 19.800L16 15L20.500 13.500Z" /></Glyph>;
const Annotate = () => (
  <Glyph>
    <text x="0" y="12" fontSize="19" fontFamily="DejaVu Sans" fill="#333" stroke="none">a</text>
    <path d={CURSOR} transform="translate(13 11.500) scale(0.780)" strokeWidth="1.700" />
  </Glyph>
);
const Orbit = () => (
  <Glyph>
    <ellipse cx="13" cy="13" rx="5.500" ry="11" strokeWidth="2.600" /><ellipse cx="13" cy="13" rx="11" ry="5.500" strokeWidth="2.600" />
    <ellipse cx="13" cy="13" rx="5.500" ry="11" stroke="#aaa" strokeWidth="0.800" /><ellipse cx="13" cy="13" rx="11" ry="5.500" stroke="#aaa" strokeWidth="0.800" />
    <path d="M9 9L17 8V12L12 17L9 15Z" fill="#333" />
    <path d="M13 20L17 13.500L19.500 18" strokeWidth="2.200" stroke="#bbb" /><path d="M13 21.500L17.500 14L20 19" strokeWidth="0.900" />
  </Glyph>
);
const Explode = () => <Glyph><path d="M4 6.500L13 2.500L22 6.500L13 10.500ZM3.500 10L11.500 13.500V24L7 22L3.500 19.500ZM22.500 10L14.500 13.500V24L19 22L22.500 19.500ZM4 6.500V9L11.500 12.500M22 6.500V9L14.500 12.500" /></Glyph>;
const Section = () => <Glyph><path d="M6 5.500H21.500V18L18 22.500H6Z" fill="#8295a3" stroke="#5d7e94" /><path d="M3.500 10.500H15Q16.500 10.500 16.500 12V19.500Q16.500 21 15 21H5Q3.500 21 3.500 19.500ZM3.500 11L7.500 6.500Q8 6 9 6H20Q21 6 21 7.500V15L16.500 20.500M16 11L20.500 6.500" fill="#9e9e9e" /></Glyph>;
const Snapshot = () => <Glyph><path d="M2.500 6.500H8.500L10 4H16L17.500 6.500H23.500V21.500H2.500Z" /><circle cx="13" cy="13.500" r="5" /><path d="M4 10H7.500M18.500 10H22" /></Glyph>;
const Gear = () => {
  const pts = Array.from({ length: 32 }, (_, i) => {
    const r = i % 4 < 2 ? 11.300 : 8.400;
    const a = ((i + 0.500 + (i % 2 ? -0.150 : 0.150)) / 32) * Math.PI * 2 - Math.PI / 2 - 0.200;
    return `${(13 + r * Math.cos(a)).toFixed(1)},${(13 + r * Math.sin(a)).toFixed(1)}`;
  });
  return <Glyph><polygon points={pts.join(" ")} /><circle cx="13" cy="13" r="4.400" /></Glyph>;
};
const Grid = () => (
  <Glyph>
    <path d="M13 3V23M3 13H23" stroke="#111" strokeWidth="1.700" />
    <path d="M4 4.500H24M4 21.500H24M4.500 4V24M21.500 4V24" stroke="#111" strokeWidth="2" strokeDasharray="2 2" />
  </Glyph>
);
const SaveView = () => (
  <svg width="23" height="21" viewBox="0 0 23 21" fill="none" stroke="#31444e" strokeWidth="1.100">
    <path d="M3 6V2.500H6.500M11 2.500H15V5M3 11V15H7M12.500 4L6 8L12.500 12.500M11 5.500Q12.500 8 11 11" />
    <path d="M12 11H19L21 13V19H12ZM14 11V13.500H18.500V11M14 19V16H19V19" stroke="#4d5d66" />
  </svg>
);
const Magnifier = () => <svg width="14" height="14" viewBox="0 0 14 14" fill="none" stroke="#66788b" strokeWidth="1.800"><circle cx="6" cy="6" r="4.200" /><path d="M9.200 9.200L13 13" /></svg>;

const GROUPS = [
  { w: 37, shift: 4, tools: [Home] },
  { w: 75, shift: 4, tools: [Camera3D, Box] },
  { w: 112, shift: 3, tools: [Annotate, Cursor, Orbit] },
  { w: 76, tools: [Explode, Section] },
  { w: 72, shift: -1, tools: [Snapshot, Gear] },
  { w: 32, shift: 1, tools: [Grid] },
];

export default function App() {
  return (
    <Viewer>
      <GlobalStyle />
      <Scene viewBox="0 0 1667 1027">
        <defs>
          <linearGradient id="roof" x1="0" y1="1" x2="1" y2="0"><stop offset="0" stopColor="#3a3e46" /><stop offset="1" stopColor="#4a5461" /></linearGradient>
          <linearGradient id="drum"><stop offset="0" stopColor="#343b4a" /><stop offset="0.500" stopColor="#454763" /><stop offset="1" stopColor="#3d4957" /></linearGradient>
          <linearGradient id="dish"><stop offset="0" stopColor="#6f818c" /><stop offset="0.600" stopColor="#8fa4ad" /><stop offset="1" stopColor="#66777f" /></linearGradient>
          <linearGradient id="loop"><stop offset="0" stopColor="#3f370d" /><stop offset="1" stopColor="#5f5417" /></linearGradient>
        </defs>
        <Building />
        <Axes />
      </Scene>

      <Panel>
        <TreeHeader>
          <CollapseButton>
            <svg width="15" height="15" viewBox="0 0 15 15" stroke="#888" fill="none" strokeWidth="1.800"><path d="M13 13L3 3M2.500 8V2.500H8" /></svg>
          </CollapseButton>
          <Tab $active $first>Model Tree</Tab>
          <Tab>Views</Tab>
          <Tab>Layers</Tab>
          <MenuDots><i /></MenuDots>
        </TreeHeader>
        <Tree>
          {ROWS.map((row, i) => <TreeRow key={i} row={row} previous={ROWS[i - 1]} />)}
          <ScrollThumb />
        </Tree>
        <Splitter />
        <PropertyPane>
          <Table>
            <colgroup><col width="229" /><col width="230" /></colgroup>
            <tbody>
              <tr><Cell $head>Property</Cell><Cell $head>Value</Cell></tr>
              {PROPERTIES.map(([name, value]) => (
                <tr key={name}>
                  <Cell $tall={name === "Name"}>{name}</Cell>
                  <Cell $korean={name === "Name"}>{value}</Cell>
                </tr>
              ))}
            </tbody>
          </Table>
        </PropertyPane>
      </Panel>

      <Dock>
        {GROUPS.map((g, i) => (
          <ToolGroup key={i} $w={g.w} $shift={g.shift} $first={i === 0} $last={i === GROUPS.length - 1}>
            {g.tools.map((Icon, k) => <Tool key={k} $active={Icon === Cursor}><Icon /></Tool>)}
          </ToolGroup>
        ))}
        <ExtraButton $w={37} $gap={11}><ExtraIcon $w={23} $bg="#9fc4d6"><SaveView /></ExtraIcon></ExtraButton>
        <ExtraButton $w={37} $gap={4}><ExtraIcon $w={24} $bg="#86add6"><Magnifier /></ExtraIcon></ExtraButton>
      </Dock>
    </Viewer>
  );
}
